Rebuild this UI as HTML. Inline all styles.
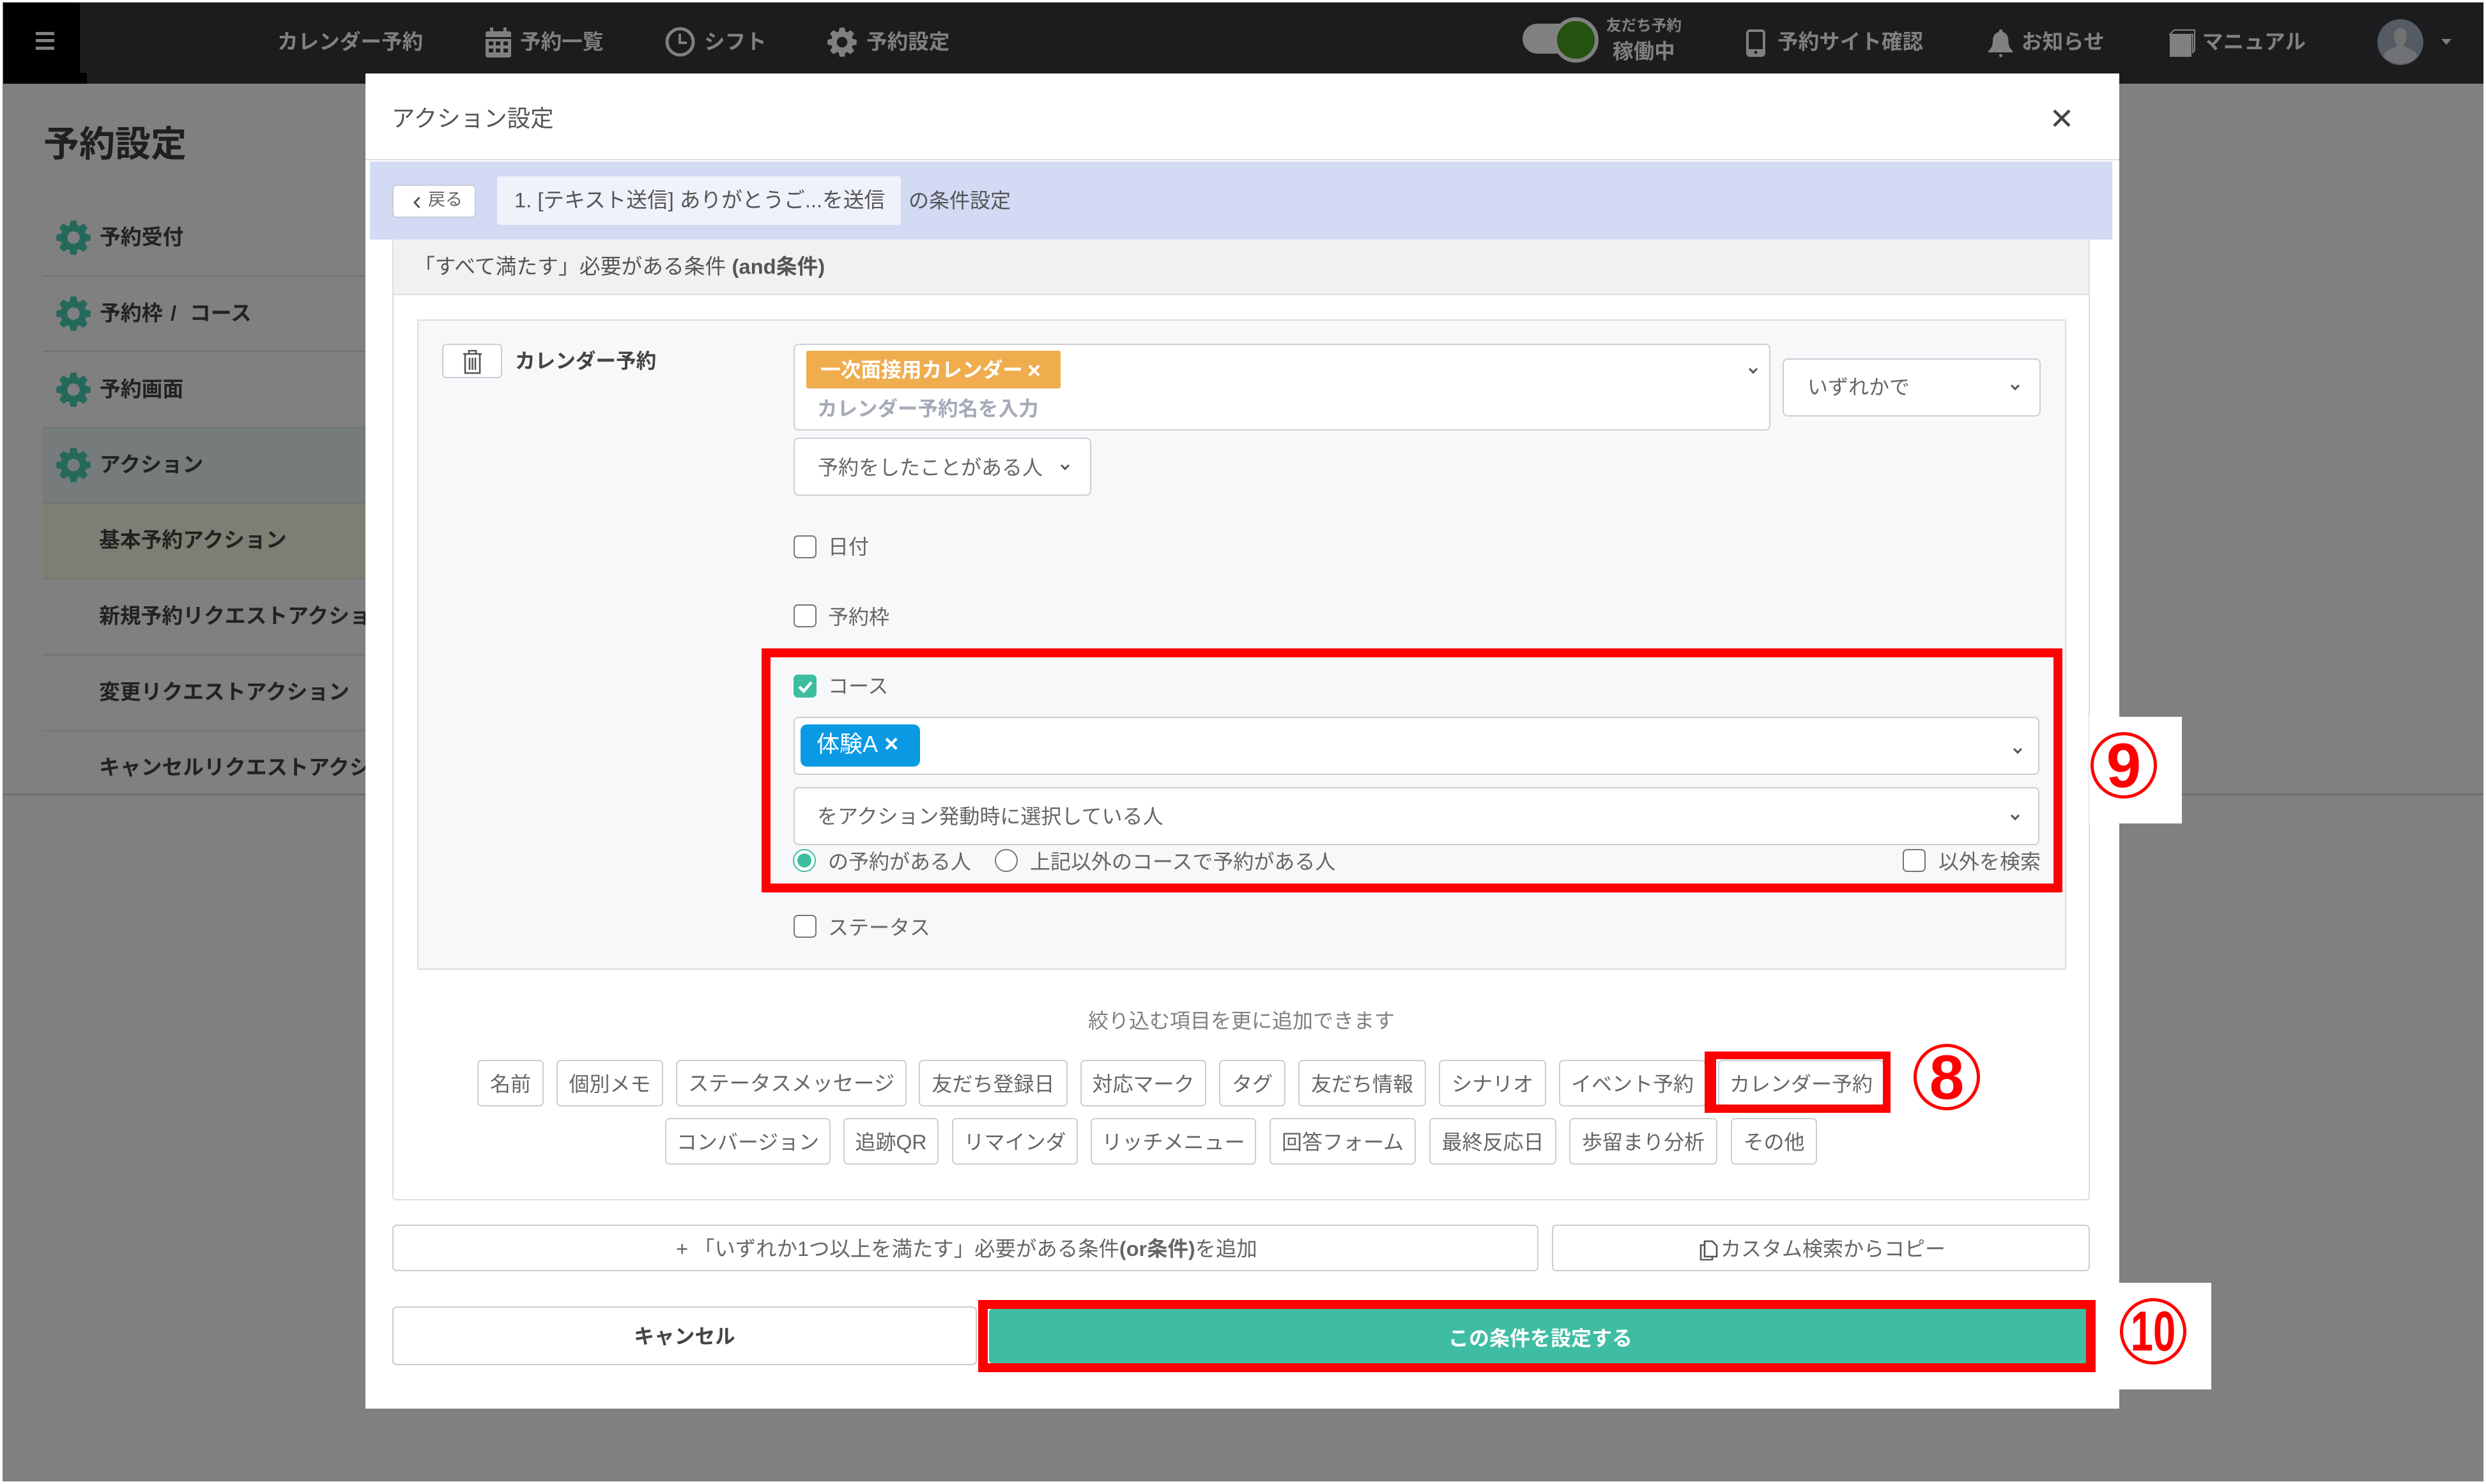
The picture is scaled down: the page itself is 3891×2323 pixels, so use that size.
<!DOCTYPE html>
<html lang="ja"><head><meta charset="utf-8"><title>アクション設定</title>
<style>
html,body{margin:0;padding:0;width:3891px;height:2323px;overflow:hidden;background:#fff}
body{position:relative;font-family:"Liberation Sans","Noto Sans CJK JP",sans-serif}
div,svg{position:absolute}
.r{box-sizing:border-box}
.t{position:absolute;white-space:nowrap;line-height:1;transform:translateY(-50%);font-size:32px;color:#666}
.nav{color:#808080;font-weight:700;font-size:32.6px}
.side{color:#222;font-weight:700;font-size:32.8px;left:155px}
.b{box-sizing:border-box;background:#fff;border:2px solid #ccced4;border-radius:7px;display:flex;align-items:center;justify-content:center;color:#666;font-size:32px;white-space:nowrap;line-height:1}
.chip{top:1659px;height:73px;padding-top:2px}
.chip2{top:1750px;height:73px;padding-top:2px}
.sel{box-sizing:border-box;background:#fff;border:2px solid #ccced4;border-radius:8px}
.chev{width:10px;height:10px;box-sizing:border-box;border-right:3px solid #555;border-bottom:3px solid #555;transform:rotate(45deg)}
.cb{box-sizing:border-box;width:36px;height:36px;background:#fff;border:2.5px solid #777;border-radius:7px;left:1242px}
.rad{box-sizing:border-box;width:36px;height:36px;background:#fff;border:2.5px solid #777;border-radius:50%}
.circ{box-sizing:border-box;width:104px;height:104px;border:5px solid #f00;border-radius:50%;display:flex;align-items:center;justify-content:center;color:#f00;font-weight:700;font-size:98px;line-height:1}
.sl{left:67px;width:505px;height:2px;background:#737373}
</style></head>
<body>
<!-- page -->
<div style="left:4px;top:3px;width:3883px;height:2316px;background:#808080"></div>
<div style="left:4px;top:3px;width:3883px;height:1px;background:#bdbdbd"></div>
<!-- top bar -->
<div style="left:5px;top:4px;width:3882px;height:127px;background:#1c1c1e"></div>
<div style="left:5px;top:4px;width:120px;height:127px;background:#000"></div>
<div style="left:125px;top:114px;width:11px;height:17px;background:#000"></div>
<div style="left:56px;top:50px;width:29px;height:5px;background:#808080"></div>
<div style="left:56px;top:61px;width:29px;height:5px;background:#808080"></div>
<div style="left:56px;top:73px;width:29px;height:5px;background:#808080"></div>

<span class="t nav" style="left:434px;top:66px">カレンダー予約</span>
<svg style="left:759px;top:42px" width="42" height="48" viewBox="0 0 42 48"><rect x="1" y="7" width="40" height="41" rx="3" fill="#808080"/><rect x="8" y="1" width="5" height="10" fill="#808080"/><rect x="29" y="1" width="5" height="10" fill="#808080"/><g fill="#1c1c1e"><rect x="1" y="16" width="40" height="3"/><rect x="6" y="23" width="7" height="6"/><rect x="17" y="23" width="7" height="6"/><rect x="29" y="23" width="7" height="6"/><rect x="6" y="34" width="7" height="6"/><rect x="17" y="34" width="7" height="6"/><rect x="29" y="34" width="7" height="6"/></g></svg>
<span class="t nav" style="left:814px;top:66px">予約一覧</span>
<svg style="left:1041px;top:42px" width="47" height="47" viewBox="0 0 47 47"><circle cx="23.5" cy="23.5" r="20.5" fill="none" stroke="#808080" stroke-width="5"/><path d="M23 11v14h11" fill="none" stroke="#808080" stroke-width="4"/></svg>
<span class="t nav" style="left:1102px;top:66px">シフト</span>
<svg style="left:1295px;top:43px" width="46" height="46" viewBox="0 0 54 54" fill="#808080" stroke="#808080"><circle cx="27" cy="27" r="15" fill="none" stroke-width="10.500"/><g stroke-width="1.500" stroke-linejoin="round"><path id="tn" d="M23 1h8l2 10H21z"/><path d="M23 1h8l2 10H21z" transform="rotate(45 27 27)"/><path d="M23 1h8l2 10H21z" transform="rotate(90 27 27)"/><path d="M23 1h8l2 10H21z" transform="rotate(135 27 27)"/><path d="M23 1h8l2 10H21z" transform="rotate(180 27 27)"/><path d="M23 1h8l2 10H21z" transform="rotate(225 27 27)"/><path d="M23 1h8l2 10H21z" transform="rotate(270 27 27)"/><path d="M23 1h8l2 10H21z" transform="rotate(315 27 27)"/></g></svg>
<span class="t nav" style="left:1356px;top:66px">予約設定</span>

<div style="left:2383px;top:37px;width:80px;height:47px;border-radius:24px;background:#808080"></div>
<div class="r" style="left:2431px;top:27px;width:71px;height:71px;border-radius:50%;background:#265210;border:6px solid #808080"></div>
<span class="t nav" style="left:2514px;top:42px;font-size:23.6px">友だち予約</span>
<span class="t nav" style="left:2524px;top:81px;font-size:32.6px">稼働中</span>
<svg style="left:2732px;top:46px" width="32" height="43" viewBox="0 0 32 43"><rect x="3" y="2" width="26" height="39" rx="4" fill="none" stroke="#808080" stroke-width="4"/><rect x="3" y="31" width="26" height="10" fill="#808080"/><circle cx="16" cy="36" r="2.5" fill="#1c1c1e"/></svg>
<span class="t nav" style="left:2782px;top:66px">予約サイト確認</span>
<svg style="left:3111px;top:45px" width="41" height="45" viewBox="0 0 41 45"><path d="M20.5 1c2 0 3 1.5 3 4 7 2 9 8 9 15 0 8 4 12 7 15v2H1v-2c3-3 7-7 7-15 0-7 2-13 9.500-15 0-2.500 1-4 3-4z" fill="#808080"/><circle cx="20.500" cy="42" r="2.500" fill="#808080"/></svg>
<span class="t nav" style="left:3164px;top:66px">お知らせ</span>
<svg style="left:3395px;top:45px" width="42" height="45" viewBox="0 0 42 45"><path d="M1 9 8 2h32v32l-3 3V9z" fill="none" stroke="#808080" stroke-width="2"/><rect x="1" y="10" width="34" height="34" fill="#808080"/></svg>
<span class="t nav" style="left:3447px;top:66px">マニュアル</span>
<svg style="left:3721px;top:30px" width="72" height="72" viewBox="0 0 72 72"><circle cx="36" cy="36" r="36" fill="#555b63"/><path d="M36 14c7 0 10 6 10 13 0 6-3 11-5 14 1 3 10 5 17 9 3 3 4 6 4 9a36 36 0 0 1-52 0c0-3 1-6 4-9 7-4 16-6 17-9-2-3-5-8-5-14 0-7 3-13 10-13z" fill="#707274"/></svg>
<svg style="left:3821px;top:61px" width="16" height="9" viewBox="0 0 16 9"><path d="M0 0h16L8 9z" fill="#808080"/></svg>

<!-- sidebar -->
<span class="t" style="left:68px;top:226px;font-size:56px;font-weight:700;color:#1f1f1f">予約設定</span>
<div style="left:67px;top:668px;width:505px;height:119px;background:#757c7b"></div>
<div style="left:67px;top:787px;width:505px;height:119px;background:#7e7e74"></div>
<div class="sl" style="top:431px"></div><div class="sl" style="top:549px"></div><div class="sl" style="top:668px"></div><div class="sl" style="top:787px"></div><div class="sl" style="top:905px"></div><div class="sl" style="top:1024px"></div><div class="sl" style="top:1143px"></div>
<div style="left:4px;top:1242px;width:3883px;height:3px;background:#6e6e6e"></div>

<svg style="left:88px;top:345px" width="54" height="54" viewBox="0 0 54 54" fill="#25695a" stroke="#25695a"><circle cx="27" cy="27" r="15" fill="none" stroke-width="10.500"/><g stroke-width="1.500" stroke-linejoin="round"><path d="M23 1h8l2 10H21z"/><path d="M23 1h8l2 10H21z" transform="rotate(45 27 27)"/><path d="M23 1h8l2 10H21z" transform="rotate(90 27 27)"/><path d="M23 1h8l2 10H21z" transform="rotate(135 27 27)"/><path d="M23 1h8l2 10H21z" transform="rotate(180 27 27)"/><path d="M23 1h8l2 10H21z" transform="rotate(225 27 27)"/><path d="M23 1h8l2 10H21z" transform="rotate(270 27 27)"/><path d="M23 1h8l2 10H21z" transform="rotate(315 27 27)"/></g></svg>
<svg style="left:88px;top:464px" width="54" height="54" viewBox="0 0 54 54" fill="#25695a" stroke="#25695a"><circle cx="27" cy="27" r="15" fill="none" stroke-width="10.500"/><g stroke-width="1.500" stroke-linejoin="round"><path d="M23 1h8l2 10H21z"/><path d="M23 1h8l2 10H21z" transform="rotate(45 27 27)"/><path d="M23 1h8l2 10H21z" transform="rotate(90 27 27)"/><path d="M23 1h8l2 10H21z" transform="rotate(135 27 27)"/><path d="M23 1h8l2 10H21z" transform="rotate(180 27 27)"/><path d="M23 1h8l2 10H21z" transform="rotate(225 27 27)"/><path d="M23 1h8l2 10H21z" transform="rotate(270 27 27)"/><path d="M23 1h8l2 10H21z" transform="rotate(315 27 27)"/></g></svg>
<svg style="left:88px;top:583px" width="54" height="54" viewBox="0 0 54 54" fill="#25695a" stroke="#25695a"><circle cx="27" cy="27" r="15" fill="none" stroke-width="10.500"/><g stroke-width="1.500" stroke-linejoin="round"><path d="M23 1h8l2 10H21z"/><path d="M23 1h8l2 10H21z" transform="rotate(45 27 27)"/><path d="M23 1h8l2 10H21z" transform="rotate(90 27 27)"/><path d="M23 1h8l2 10H21z" transform="rotate(135 27 27)"/><path d="M23 1h8l2 10H21z" transform="rotate(180 27 27)"/><path d="M23 1h8l2 10H21z" transform="rotate(225 27 27)"/><path d="M23 1h8l2 10H21z" transform="rotate(270 27 27)"/><path d="M23 1h8l2 10H21z" transform="rotate(315 27 27)"/></g></svg>
<svg style="left:88px;top:701px" width="54" height="54" viewBox="0 0 54 54" fill="#25695a" stroke="#25695a"><circle cx="27" cy="27" r="15" fill="none" stroke-width="10.500"/><g stroke-width="1.500" stroke-linejoin="round"><path d="M23 1h8l2 10H21z"/><path d="M23 1h8l2 10H21z" transform="rotate(45 27 27)"/><path d="M23 1h8l2 10H21z" transform="rotate(90 27 27)"/><path d="M23 1h8l2 10H21z" transform="rotate(135 27 27)"/><path d="M23 1h8l2 10H21z" transform="rotate(180 27 27)"/><path d="M23 1h8l2 10H21z" transform="rotate(225 27 27)"/><path d="M23 1h8l2 10H21z" transform="rotate(270 27 27)"/><path d="M23 1h8l2 10H21z" transform="rotate(315 27 27)"/></g></svg>

<span class="t side" style="top:372px;left:156px">予約受付</span>
<span class="t side" style="top:491px;left:156px">予約枠</span>
<span class="t side" style="top:491px;left:267px">/</span>
<span class="t side" style="top:491px;left:297px">コース</span>
<span class="t side" style="top:610px;left:156px">予約画面</span>
<span class="t side" style="top:728px;left:156px">アクション</span>
<span class="t side" style="top:846px;left:155px">基本予約アクション</span>
<div style="left:155px;top:940px;width:417px;height:50px;overflow:hidden"><span class="t side" style="left:0;top:25px">新規予約リクエストアクション</span></div>
<span class="t side" style="top:1084px">変更リクエストアクション</span>
<div style="left:155px;top:1177px;width:417px;height:50px;overflow:hidden"><span class="t side" style="left:0;top:25px">キャンセルリクエストアクション</span></div>

<!-- modal -->
<div style="left:572px;top:115px;width:2745px;height:2090px;background:#fff"></div>
<span class="t" style="left:613px;top:186px;font-size:36.5px;color:#555">アクション設定</span>
<svg style="left:3211px;top:170px" width="32" height="30" viewBox="0 0 32 30"><path d="M4 3l24 24M28 3L4 27" stroke="#444" stroke-width="4.500" fill="none"/></svg>
<div style="left:572px;top:249px;width:2745px;height:2px;background:#dcdcdc"></div>
<div style="left:579px;top:253px;width:2727px;height:122px;background:#d2daf4"></div>
<div class="b" style="left:614px;top:289px;width:131px;height:52px;border-color:#c8ccd8"></div>
<svg style="left:646px;top:307px" width="13" height="19" viewBox="0 0 13 19"><path d="M10.500 2 3 10l7.500 8" fill="none" stroke="#555" stroke-width="3"/></svg>
<span class="t" style="left:670px;top:313px;font-size:27px;color:#666">戻る</span>
<div style="left:778px;top:276px;width:632px;height:76px;background:#f0f2fb;border-radius:4px"></div>
<span class="t" style="left:805px;top:314px;font-size:32.7px;color:#555">1. [テキスト送信] ありがとうご...を送信</span>
<span class="t" style="left:1422px;top:314px;font-size:32px;color:#555">の条件設定</span>

<!-- card -->
<div class="r" style="left:614px;top:375px;width:2657px;height:1504px;background:#fff;border:2px solid #dcdde0;border-top:0;border-radius:0 0 6px 6px"></div>
<div class="r" style="left:614px;top:375px;width:2657px;height:87px;background:#f1f1f3;border:2px solid #dcdde0;border-top:0"></div>
<span class="t" style="left:648px;top:418px;font-size:32.8px;color:#555">「すべて満たす」必要がある条件 <b>(and条件)</b></span>

<div class="r" style="left:653px;top:500px;width:2581px;height:1018px;background:#f7f8fa;border:2px solid #dcdde0"></div>
<div class="b" style="left:692px;top:538px;width:94px;height:54px"></div>
<svg style="left:723px;top:547px" width="33" height="39" viewBox="0 0 33 39"><path d="M2 7h29M11 7V2h11v5M5 7v30h23V7M12 13v19M16.500 13v19M21 13v19" fill="none" stroke="#555" stroke-width="2.600"/></svg>
<span class="t" style="left:806px;top:566px;font-size:31.6px;font-weight:700;color:#444">カレンダー予約</span>

<div class="sel" style="left:1242px;top:538px;width:1529px;height:136px"></div>
<div style="left:1262px;top:549px;width:398px;height:59px;background:#efad4e;border-radius:3px"></div>
<span class="t" style="left:1284px;top:580px;font-size:31.7px;font-weight:700;color:#fff">一次面接用カレンダー</span>
<span class="t" style="left:1608px;top:580px;font-size:36px;font-weight:700;color:#fff">×</span>
<span class="t" style="left:1279px;top:640px;font-size:31.5px;font-weight:700;color:#a4aab8">カレンダー予約名を入力</span>
<div class="chev" style="left:2739px;top:573px"></div>

<div class="sel" style="left:2790px;top:561px;width:404px;height:91px"></div>
<span class="t" style="left:2829px;top:606px">いずれかで</span>
<div class="chev" style="left:3149px;top:599px"></div>

<div class="sel" style="left:1242px;top:685px;width:466px;height:91px"></div>
<span class="t" style="left:1280px;top:732px">予約をしたことがある人</span>
<div class="chev" style="left:1662px;top:724px"></div>

<div class="cb" style="top:838px"></div><span class="t" style="left:1296px;top:856px">日付</span>
<div class="cb" style="top:946px"></div><span class="t" style="left:1296px;top:966px">予約枠</span>

<div class="r" style="left:1192px;top:1015px;width:2036px;height:382px;border:14px solid #f00"></div>
<div class="r" style="left:1242px;top:1056px;width:36px;height:36px;background:#3dbda0;border-radius:7px"></div>
<svg style="left:1242px;top:1056px" width="36" height="36" viewBox="0 0 36 36"><path d="M9 19l7 7 12-14" fill="none" stroke="#fff" stroke-width="4.500"/></svg>
<span class="t" style="left:1296px;top:1074px">コース</span>
<div class="sel" style="left:1242px;top:1122px;width:1950px;height:91px"></div>
<div style="left:1253px;top:1134px;width:187px;height:66px;background:#0a9ae4;border-radius:10px"></div>
<span class="t" style="left:1278px;top:1165px;font-size:36px;color:#fff">体験A</span>
<span class="t" style="left:1384px;top:1165px;font-size:38px;font-weight:700;color:#fff">×</span>
<div class="chev" style="left:3153px;top:1168px"></div>
<div class="sel" style="left:1242px;top:1232px;width:1950px;height:91px"></div>
<span class="t" style="left:1279px;top:1278px">をアクション発動時に選択している人</span>
<div class="chev" style="left:3149px;top:1272px"></div>
<div class="rad" style="left:1241px;top:1329px;border-color:#3dbda0"></div>
<div style="left:1248px;top:1336px;width:22px;height:22px;border-radius:50%;background:#3dbda0"></div>
<span class="t" style="left:1296px;top:1349px">の予約がある人</span>
<div class="rad" style="left:1557px;top:1329px"></div>
<span class="t" style="left:1612px;top:1349px">上記以外のコースで予約がある人</span>
<div class="cb" style="left:2978px;top:1329px"></div>
<span class="t" style="left:3034px;top:1349px">以外を検索</span>

<div class="cb" style="top:1432px"></div><span class="t" style="left:1296px;top:1452px">ステータス</span>

<span class="t" style="left:1703px;top:1598px;color:#808080">絞り込む項目を更に追加できます</span>
<div class="b chip" style="left:747px;width:104px">名前</div>
<div class="b chip" style="left:871px;width:167px">個別メモ</div>
<div class="b chip" style="left:1058px;width:361px;font-size:32.4px">ステータスメッセージ</div>
<div class="b chip" style="left:1438px;width:233px">友だち登録日</div>
<div class="b chip" style="left:1691px;width:197px">対応マーク</div>
<div class="b chip" style="left:1908px;width:104px">タグ</div>
<div class="b chip" style="left:2032px;width:200px">友だち情報</div>
<div class="b chip" style="left:2252px;width:168px">シナリオ</div>
<div class="b chip" style="left:2440px;width:230px">イベント予約</div>
<div class="b chip" style="left:2689px;width:260px">カレンダー予約</div>
<div class="r" style="left:2668px;top:1646px;width:291px;height:96px;border:solid #f00;border-width:12px 12px 13px 18px"></div>

<div class="b chip2" style="left:1041px;width:259px">コンバージョン</div>
<div class="b chip2" style="left:1320px;width:149px">追跡QR</div>
<div class="b chip2" style="left:1490px;width:197px">リマインダ</div>
<div class="b chip2" style="left:1707px;width:259px">リッチメニュー</div>
<div class="b chip2" style="left:1987px;width:229px">回答フォーム</div>
<div class="b chip2" style="left:2237px;width:199px">最終反応日</div>
<div class="b chip2" style="left:2456px;width:232px">歩留まり分析</div>
<div class="b chip2" style="left:2709px;width:135px">その他</div>

<div class="b" style="left:614px;top:1917px;width:1794px;height:73px;padding:3px 0 0 4px;font-size:32.4px"><span>+ 「いずれか1つ以上を満たす」必要がある条件<b>(or条件)</b>を追加</span></div>
<div class="b" style="left:2429px;top:1917px;width:842px;height:73px;padding-top:3px"><span style="position:absolute;left:262px">カスタム検索からコピー</span></div>
<svg style="left:2660px;top:1941px" width="30" height="32" viewBox="0 0 30 32"><path d="M8 8H2v23h18v-5M8 2h12l7 7v17H8z" fill="none" stroke="#555" stroke-width="2.600"/></svg>

<div class="b" style="left:614px;top:2045px;width:915px;height:92px;padding-top:4px;font-weight:700;color:#444;font-size:31.7px;border-color:#ccc">キャンセル</div>
<div style="left:1531px;top:2035px;width:1749px;height:113px;background:#f00"></div>
<div style="left:1546px;top:2049px;width:1719px;height:85px;background:#fff"></div>
<div class="r" style="left:1548px;top:2049px;width:1717px;height:85px;padding:3px 0 0 9px;background:#3fbda3;border-radius:5px 0 0 5px;display:flex;align-items:center;justify-content:center;color:#fff;font-weight:700;font-size:32px">この条件を設定する</div>

<!-- callouts -->
<div style="left:3270px;top:1122px;width:145px;height:167px;background:#fff"></div>
<div style="left:3316px;top:2008px;width:145px;height:167px;background:#fff"></div>
<div class="circ" style="left:3272px;top:1146px">9</div>
<div class="circ" style="left:2995px;top:1634px">8</div>
<div class="circ" style="left:3318px;top:2032px"><span style="display:block;transform:scaleX(.72);font-size:88px">10</span></div>
</body></html>
